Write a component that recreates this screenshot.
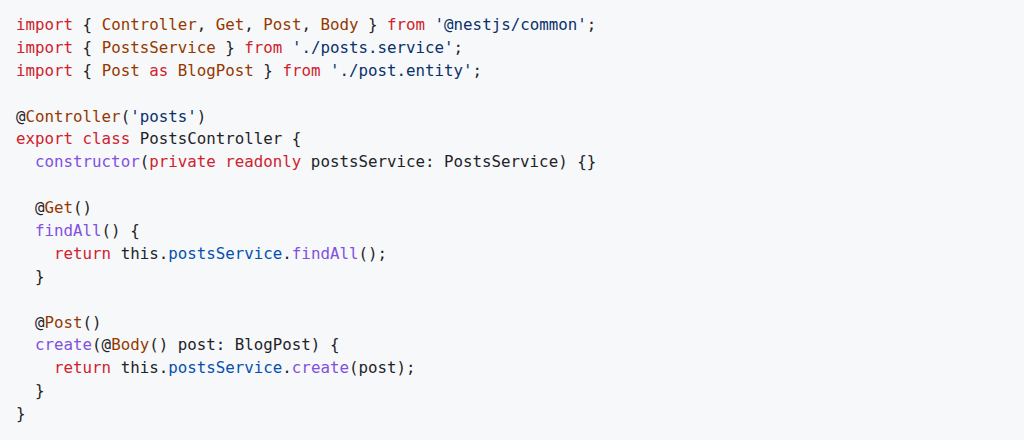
type Tok = [string, string];

const K = "text-[#cf222e]"; // keyword
const E = "text-[#953800]"; // entity
const S = "text-[#0a3069]"; // string
const F = "text-[#8250df]"; // function
const P = "text-[#0550ae]"; // property
const D = "text-[#1f2328]"; // default

const lines: Tok[][] = [
  [[K, "import"], [D, " { "], [E, "Controller"], [D, ", "], [E, "Get"], [D, ", "], [E, "Post"], [D, ", "], [E, "Body"], [D, " } "], [K, "from"], [D, " "], [S, "'@nestjs/common'"], [D, ";"]],
  [[K, "import"], [D, " { "], [E, "PostsService"], [D, " } "], [K, "from"], [D, " "], [S, "'./posts.service'"], [D, ";"]],
  [[K, "import"], [D, " { "], [E, "Post"], [D, " "], [K, "as"], [D, " "], [E, "BlogPost"], [D, " } "], [K, "from"], [D, " "], [S, "'./post.entity'"], [D, ";"]],
  [],
  [[D, "@"], [E, "Controller"], [D, "("], [S, "'posts'"], [D, ")"]],
  [[K, "export"], [D, " "], [K, "class"], [D, " PostsController {"]],
  [[D, "  "], [F, "constructor"], [D, "("], [K, "private"], [D, " "], [K, "readonly"], [D, " postsService: PostsService) {}"]],
  [],
  [[D, "  @"], [E, "Get"], [D, "()"]],
  [[D, "  "], [F, "findAll"], [D, "() {"]],
  [[D, "    "], [K, "return"], [D, " this."], [P, "postsService"], [D, "."], [F, "findAll"], [D, "();"]],
  [[D, "  }"]],
  [],
  [[D, "  @"], [E, "Post"], [D, "()"]],
  [[D, "  "], [F, "create"], [D, "(@"], [E, "Body"], [D, "() post: BlogPost) {"]],
  [[D, "    "], [K, "return"], [D, " this."], [P, "postsService"], [D, "."], [F, "create"], [D, "(post);"]],
  [[D, "  }"]],
  [[D, "}"]],
];

export default function App() {
  return (
    <div className="w-[1024px] h-[440px] bg-[#f6f8fa] overflow-hidden">
      <pre
        className="pt-[14px] pl-[16px] text-[15.8px] leading-[22.9px] text-[#1f2328]"
        style={{ fontFamily: "'DejaVu Sans Mono', monospace" }}
      >
        {lines.map((line, i) => (
          <div key={i} className="h-[22.9px]">
            {line.map(([c, t], j) => (
              <span key={j} className={c}>
                {t}
              </span>
            ))}
          </div>
        ))}
      </pre>
    </div>
  );
}
